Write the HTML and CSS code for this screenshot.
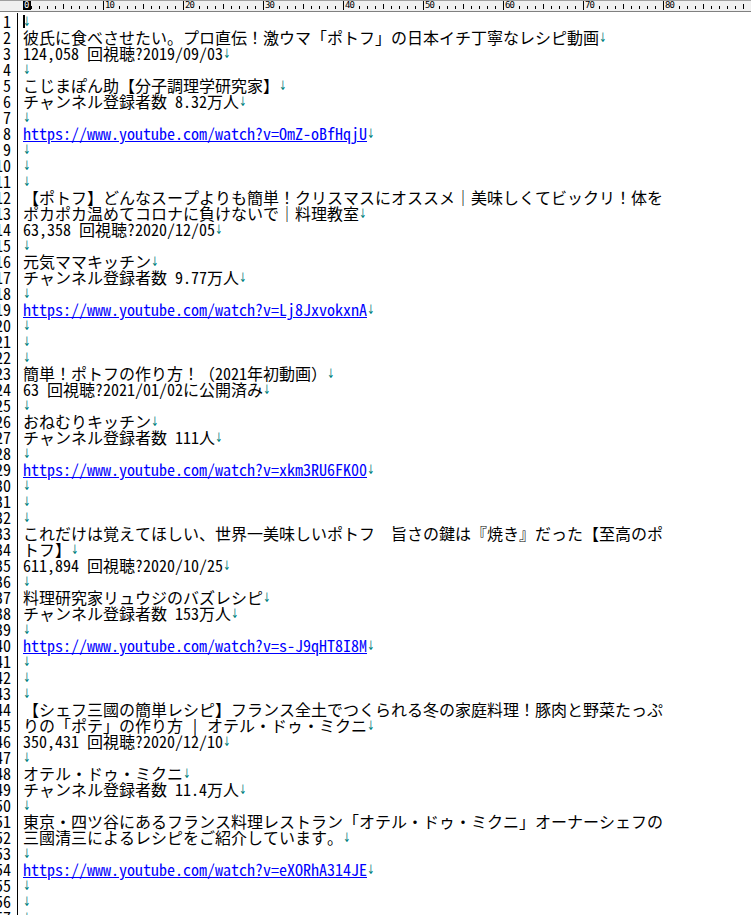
FILE: index.html
```html
<!DOCTYPE html>
<html lang="ja">
<head>
<meta charset="utf-8">
<title>editor</title>
<link rel="stylesheet" href="styles.css">
</head>
<body>
<div class="ruler">
  <div class="rc rc0"><span class="cur0">0</span></div>
  <div class="rc"><span class="rl">10</span></div>
  <div class="rc"><span class="rl">20</span></div>
  <div class="rc"><span class="rl">30</span></div>
  <div class="rc"><span class="rl">40</span></div>
  <div class="rc"><span class="rl">50</span></div>
  <div class="rc"><span class="rl">60</span></div>
  <div class="rc"><span class="rl">70</span></div>
  <div class="rc"><span class="rl">80</span></div>
</div>
<div class="editor">
<div class="row"><span class="ln">1</span><span class="tx"><span class="caret"></span><span class="eol">↓</span></span></div>
<div class="row"><span class="ln">2</span><span class="tx">彼氏に食べさせたい。プロ直伝！激ウマ「ポトフ」の日本イチ丁寧なレシピ動画<span class="eol">↓</span></span></div>
<div class="row"><span class="ln">3</span><span class="tx">124,058 回視聴?2019/09/03<span class="eol">↓</span></span></div>
<div class="row"><span class="ln">4</span><span class="tx"><span class="eol">↓</span></span></div>
<div class="row"><span class="ln">5</span><span class="tx">こじまぽん助【分子調理学研究家】<span class="eol">↓</span></span></div>
<div class="row"><span class="ln">6</span><span class="tx">チャンネル登録者数 8.32万人<span class="eol">↓</span></span></div>
<div class="row"><span class="ln">7</span><span class="tx"><span class="eol">↓</span></span></div>
<div class="row"><span class="ln">8</span><span class="tx"><a class="url" href="#">https://www.youtube.com/watch?v=OmZ-oBfHqjU</a><span class="eol">↓</span></span></div>
<div class="row"><span class="ln">9</span><span class="tx"><span class="eol">↓</span></span></div>
<div class="row"><span class="ln">10</span><span class="tx"><span class="eol">↓</span></span></div>
<div class="row"><span class="ln">11</span><span class="tx"><span class="eol">↓</span></span></div>
<div class="row"><span class="ln">12</span><span class="tx">【ポトフ】どんなスープよりも簡単！クリスマスにオススメ｜美味しくてビックリ！体を</span></div>
<div class="row"><span class="ln">13</span><span class="tx">ポカポカ温めてコロナに負けないで｜料理教室<span class="eol">↓</span></span></div>
<div class="row"><span class="ln">14</span><span class="tx">63,358 回視聴?2020/12/05<span class="eol">↓</span></span></div>
<div class="row"><span class="ln">15</span><span class="tx"><span class="eol">↓</span></span></div>
<div class="row"><span class="ln">16</span><span class="tx">元気ママキッチン<span class="eol">↓</span></span></div>
<div class="row"><span class="ln">17</span><span class="tx">チャンネル登録者数 9.77万人<span class="eol">↓</span></span></div>
<div class="row"><span class="ln">18</span><span class="tx"><span class="eol">↓</span></span></div>
<div class="row"><span class="ln">19</span><span class="tx"><a class="url" href="#">https://www.youtube.com/watch?v=Lj8JxvokxnA</a><span class="eol">↓</span></span></div>
<div class="row"><span class="ln">20</span><span class="tx"><span class="eol">↓</span></span></div>
<div class="row"><span class="ln">21</span><span class="tx"><span class="eol">↓</span></span></div>
<div class="row"><span class="ln">22</span><span class="tx"><span class="eol">↓</span></span></div>
<div class="row"><span class="ln">23</span><span class="tx">簡単！ポトフの作り方！（2021年初動画）<span class="eol">↓</span></span></div>
<div class="row"><span class="ln">24</span><span class="tx">63 回視聴?2021/01/02に公開済み<span class="eol">↓</span></span></div>
<div class="row"><span class="ln">25</span><span class="tx"><span class="eol">↓</span></span></div>
<div class="row"><span class="ln">26</span><span class="tx">おねむりキッチン<span class="eol">↓</span></span></div>
<div class="row"><span class="ln">27</span><span class="tx">チャンネル登録者数 111人<span class="eol">↓</span></span></div>
<div class="row"><span class="ln">28</span><span class="tx"><span class="eol">↓</span></span></div>
<div class="row"><span class="ln">29</span><span class="tx"><a class="url" href="#">https://www.youtube.com/watch?v=xkm3RU6FK00</a><span class="eol">↓</span></span></div>
<div class="row"><span class="ln">30</span><span class="tx"><span class="eol">↓</span></span></div>
<div class="row"><span class="ln">31</span><span class="tx"><span class="eol">↓</span></span></div>
<div class="row"><span class="ln">32</span><span class="tx"><span class="eol">↓</span></span></div>
<div class="row"><span class="ln">33</span><span class="tx">これだけは覚えてほしい、世界一美味しいポトフ　旨さの鍵は『焼き』だった【至高のポ</span></div>
<div class="row"><span class="ln">34</span><span class="tx">トフ】<span class="eol">↓</span></span></div>
<div class="row"><span class="ln">35</span><span class="tx">611,894 回視聴?2020/10/25<span class="eol">↓</span></span></div>
<div class="row"><span class="ln">36</span><span class="tx"><span class="eol">↓</span></span></div>
<div class="row"><span class="ln">37</span><span class="tx">料理研究家リュウジのバズレシピ<span class="eol">↓</span></span></div>
<div class="row"><span class="ln">38</span><span class="tx">チャンネル登録者数 153万人<span class="eol">↓</span></span></div>
<div class="row"><span class="ln">39</span><span class="tx"><span class="eol">↓</span></span></div>
<div class="row"><span class="ln">40</span><span class="tx"><a class="url" href="#">https://www.youtube.com/watch?v=s-J9qHT8I8M</a><span class="eol">↓</span></span></div>
<div class="row"><span class="ln">41</span><span class="tx"><span class="eol">↓</span></span></div>
<div class="row"><span class="ln">42</span><span class="tx"><span class="eol">↓</span></span></div>
<div class="row"><span class="ln">43</span><span class="tx"><span class="eol">↓</span></span></div>
<div class="row"><span class="ln">44</span><span class="tx">【シェフ三國の簡単レシピ】フランス全土でつくられる冬の家庭料理！豚肉と野菜たっぷ</span></div>
<div class="row"><span class="ln">45</span><span class="tx">りの「ポテ」の作り方 | オテル・ドゥ・ミクニ<span class="eol">↓</span></span></div>
<div class="row"><span class="ln">46</span><span class="tx">350,431 回視聴?2020/12/10<span class="eol">↓</span></span></div>
<div class="row"><span class="ln">47</span><span class="tx"><span class="eol">↓</span></span></div>
<div class="row"><span class="ln">48</span><span class="tx">オテル・ドゥ・ミクニ<span class="eol">↓</span></span></div>
<div class="row"><span class="ln">49</span><span class="tx">チャンネル登録者数 11.4万人<span class="eol">↓</span></span></div>
<div class="row"><span class="ln">50</span><span class="tx"><span class="eol">↓</span></span></div>
<div class="row"><span class="ln">51</span><span class="tx">東京・四ツ谷にあるフランス料理レストラン「オテル・ドゥ・ミクニ」オーナーシェフの</span></div>
<div class="row"><span class="ln">52</span><span class="tx">三國清三によるレシピをご紹介しています。<span class="eol">↓</span></span></div>
<div class="row"><span class="ln">53</span><span class="tx"><span class="eol">↓</span></span></div>
<div class="row"><span class="ln">54</span><span class="tx"><a class="url" href="#">https://www.youtube.com/watch?v=eXORhA314JE</a><span class="eol">↓</span></span></div>
<div class="row"><span class="ln">55</span><span class="tx"><span class="eol">↓</span></span></div>
<div class="row"><span class="ln">56</span><span class="tx"><span class="eol">↓</span></span></div>
<div class="row"><span class="ln">57</span><span class="tx"><span class="eol">↓</span></span></div>
</div>
</body>
</html>
```
FILE: styles.css
```css
* { box-sizing: border-box; }
html, body { margin: 0; padding: 0; background: #fff; }
body {
  width: 751px;
  height: 915px;
  overflow: hidden;
  font-family: "Noto Sans Mono CJK JP", "Noto Sans CJK JP", monospace;
  font-size: 16px;
  line-height: 16px;
  color: #000;
}

/* ruler */
.ruler {
  height: 12px;
  display: flex;
  padding-left: 23px;
  background-color: #f0f0f0;
  border-top: 1px solid #a0a0a0;
  border-bottom: 1px solid #808080;
  background-image:
    repeating-linear-gradient(to right, #000 0 1px, transparent 1px 40px),
    repeating-linear-gradient(to right, #000 0 1px, transparent 1px 8px);
  background-repeat: no-repeat, no-repeat;
  background-position: 23px 3px, 23px 5px;
  background-size: calc(100% - 23px) 5px, calc(100% - 23px) 3px;
}
.rc {
  flex: none;
  width: 80px;
  height: 9px;
  border-left: 1px solid #000;
  font-family: "DejaVu Sans Mono", monospace;
  font-size: 9px;
  line-height: 9px;
  letter-spacing: -0.9px;
}
.rc0 { border-left: none; }
.rl {
  display: inline-block;
  padding-left: 1px;
  background: #f0f0f0;
  height: 9px;
}
.cur0 {
  display: inline-block;
  width: 8px;
  height: 9px;
  background: #000;
  color: #fff;
  padding-left: 1px;
}

/* text area */
.editor { padding-top: 1px; }
.row {
  display: flex;
  height: 16px;
}
.ln {
  flex: none;
  width: 18px;
  padding-right: 6px;
  border-right: 1px solid #000;
  display: flex;
  justify-content: flex-end;
  overflow: hidden;
  white-space: nowrap;
}
.tx {
  position: relative;
  margin-left: 5px;
  white-space: pre;
}
.url {
  color: #0000ff;
  text-decoration: underline;
}
.eol {
  display: inline-block;
  width: 8px;
  height: 16px;
  overflow: visible;
  color: #008080;
  font-family: "DejaVu Sans", sans-serif;
  font-size: 13px;
  line-height: 16px;
  vertical-align: top;
  transform: translateY(1px) scaleX(0.7);
  transform-origin: 0 50%;
}
.caret {
  position: absolute;
  left: 0;
  top: 2px;
  width: 2px;
  height: 13px;
  background: #000;
}
```
